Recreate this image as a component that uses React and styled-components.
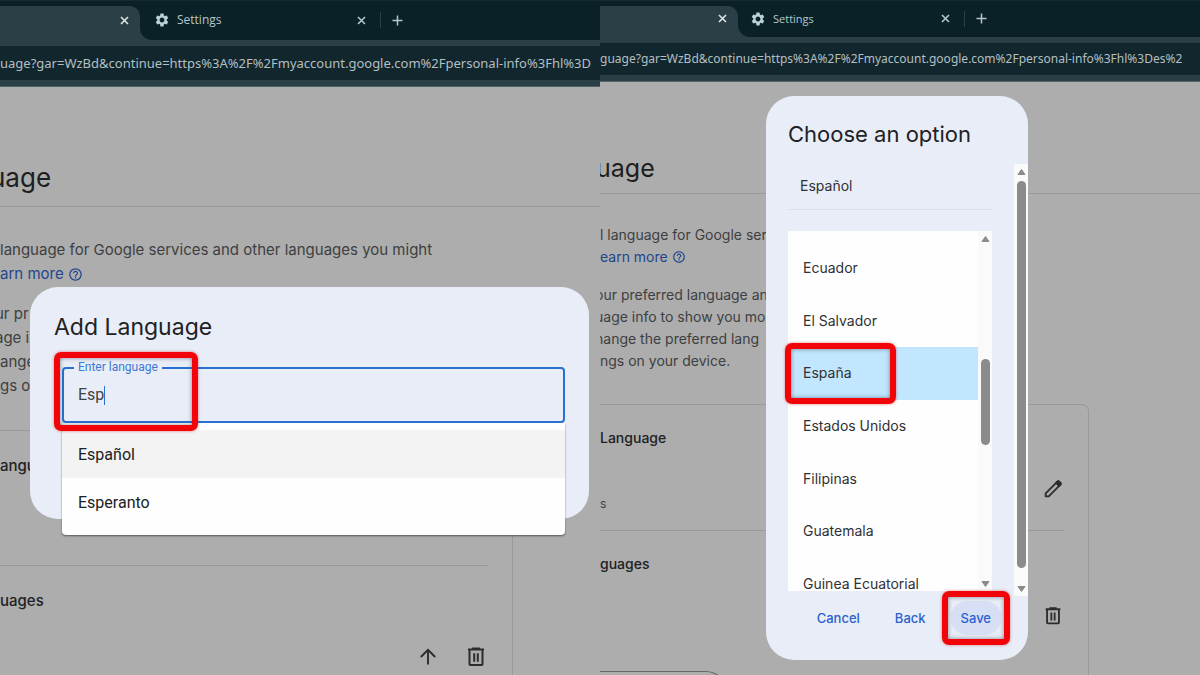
import React, { useState } from 'react';
import styled, { createGlobalStyle, css } from 'styled-components';
import { MdSettings, MdHelpOutline } from 'react-icons/md';

const GlobalStyle = createGlobalStyle`
    *, *::before, *::after {
        box-sizing: border-box;
    }

    body {
        margin: 0;
        background: #adadad;
        font-family: Inter, Roboto, sans-serif;
    }

    button, input {
        font-family: inherit;
    }
`

const Split = styled.main`
    display: grid;
    grid-template-columns: 1fr 1fr;
    height: 100vh;
    overflow: hidden;
`

const Pane = styled.section`
    position: relative;
    min-width: 0;
    overflow: hidden;
    background: #adadad;
    color: #202124;
`

/* ---------- browser chrome ---------- */

const TabStrip = styled.div`
    display: flex;
    align-items: stretch;
    height: ${({ $compact }) => ($compact ? 37 : 40)}px;
    padding-top: 6px;
    background: linear-gradient(#15292f 1px, #0a2127 1px);
`

const ActiveTab = styled.div`
    display: flex;
    align-items: center;
    justify-content: flex-end;
    width: ${({ $compact }) => ($compact ? 138 : 140)}px;
    padding-right: 11px;
    padding-bottom: 6px;
    background: #2a3f46;
    border-top-right-radius: 10px;
`

const TabRest = styled.div`
    flex: 1;
    display: flex;
    align-items: center;
    padding-bottom: 6px;
    padding-left: ${({ $compact }) => ($compact ? 12 : 14)}px;
    background: #0a2127;
    border-bottom-left-radius: 12px;
`

// fills the corner under the rounded edge of the inactive tabs
const TabCorner = styled.div`
    flex: 1;
    display: flex;
    background: linear-gradient(to right, #2a3f46 12px, #0a2127 12px) bottom / 100% 12px no-repeat;
`

const TabTitle = styled.span`
    flex: none;
    width: ${({ $compact }) => ($compact ? 175 : 187)}px;
    padding-left: 7px;
    font-family: 'Open Sans', 'Noto Sans', sans-serif;
    font-size: ${({ $compact }) => ($compact ? 11 : 12)}px;
    line-height: 16px;
    color: #b3c8cc;
`

const TabButton = styled.button`
    display: flex;
    padding: 0;
    border: none;
    background: none;
    color: ${({ $bright }) => ($bright ? '#dfe6e8' : '#b3c8cc')};
    cursor: pointer;
`

const TabDivider = styled.span`
    width: 1px;
    height: 16px;
    margin: 0 11px 0 14px;
    background: #2a3f46;
`

const Toolbar = styled.div`
    padding: 6px 0;
    background: #2a3f46;
    border-bottom: 1px solid #52646a;
`

const AddressBar = styled.div`
    height: ${({ $compact }) => ($compact ? 32 : 34)}px;
    line-height: ${({ $compact }) => ($compact ? 32 : 34)}px;
    overflow: hidden;
    white-space: nowrap;
    background: #12272d;
    font-family: 'Noto Sans', 'Open Sans', sans-serif;
    font-size: ${({ $compact }) => ($compact ? 12 : 13)}px;
    color: #b4bfc2;
`

/* ---------- settings page ---------- */

const PageHeading = styled.h1`
    margin: 0 0 0 ${({ $compact }) => ($compact ? -4 : -10)}px;
    padding-top: ${({ $compact }) => ($compact ? 69 : 74)}px;
    font-size: ${({ $compact }) => ($compact ? 25 : 26)}px;
    font-weight: 400;
    line-height: 34px;
    color: #1d1e20;
`

const HeadingRule = styled.hr`
    height: 1px;
    margin: ${({ $compact }) => ($compact ? 8 : 11)}px 0 ${({ $compact }) => ($compact ? 30 : 31)}px;
    border: none;
    background: #9b9b9b;
`

const Paragraph = styled.p`
    margin: 0 0 16px;
    font-size: ${({ $compact }) => ($compact ? 14 : 15)}px;
    line-height: ${({ $compact }) => ($compact ? 22 : 24)}px;
    color: #3d3f41;
    white-space: nowrap;
`

const Line = styled.span`
    display: block;
    margin-left: ${({ $cut }) => ($cut ? -5 : 0)}px;
`

const LearnMore = styled.a`
    display: inline-flex;
    align-items: center;
    gap: 4px;
    color: #1f468c;
    text-decoration: none;
`

const Card = styled.div`
    margin-top: 32px;
    margin-right: ${({ $compact }) => ($compact ? 111 : 87)}px;
    padding-right: 24px;
    height: 600px;
    border: 1px solid #999999;
    border-left: none;
    border-top-right-radius: 7px;
`

const CardSection = styled.div`
    display: flex;
    flex-direction: column;
    justify-content: space-between;
    height: ${({ $compact }) => ($compact ? 126 : 135)}px;
    padding: ${({ $compact }) => ($compact ? '22px 0 18px' : '24px 0 22px')};
    border-bottom: ${({ $last }) => ($last ? 'none' : '1px solid #999999')};
`

const CardTitle = styled.h2`
    margin: 0;
    font-size: ${({ $compact }) => ($compact ? 14 : 15)}px;
    font-weight: 500;
    line-height: 22px;
`

const CardRow = styled.div`
    display: flex;
    align-items: flex-end;
    justify-content: space-between;
    height: 34px;
    font-size: 12px;
    line-height: 16px;
    color: #3d3f41;
`

const IconGroup = styled.div`
    display: flex;
    align-self: flex-start;
    gap: 24px;
    margin-left: auto;
`

const IconButton = styled.button`
    display: flex;
    align-self: flex-start;
    padding: 0;
    border: none;
    background: none;
    color: #2b2c2e;
    cursor: pointer;
`

const AddPill = styled.button`
    width: 126px;
    height: 40px;
    margin-top: 14px;
    border: 1px solid #666869;
    border-left: none;
    border-radius: 0 20px 20px 0;
    background: none;
`

/* ---------- dialogs ---------- */

const Dialog = styled.div`
    position: absolute;
    background: #e8edf7;
    border-radius: 28px;
`

const LanguageDialog = styled(Dialog)`
    top: 287px;
    left: 30px;
    right: 11px;
    height: 232px;
    padding: 24px 24px 0 32px;
`

const RegionDialog = styled(Dialog)`
    display: flex;
    flex-direction: column;
    top: 96px;
    left: 166px;
    width: 262px;
    height: 564px;
    overflow: hidden;
`

const DialogTitle = styled.h2`
    margin: 0;
    font-weight: 400;
    font-size: ${({ $compact }) => ($compact ? 22 : 23)}px;
    line-height: 32px;
    color: #202124;
`

const LanguageTitle = styled(DialogTitle)`
    margin-left: -8px;
`

const RegionTitle = styled(DialogTitle)`
    padding: 22px 22px 14px;
`

const marker = css`
    content: '';
    position: absolute;
    border: 6px solid #f20509;
    border-radius: 7px;
    box-shadow: 0 0 3px rgba(200, 0, 0, 0.5), inset 0 0 4px rgba(60, 60, 80, 0.6);
    pointer-events: none;
    z-index: 2;
`

const Field = styled.label`
    position: relative;
    display: flex;
    align-items: center;
    height: 56px;
    margin-top: 24px;
    padding: 0 14px;
    border: 2px solid #2a6fd3;
    border-radius: 4px;
    font-family: Roboto, sans-serif;

    &::after {
        ${marker}
        top: -17px;
        left: -10px;
        width: 144px;
        height: 79px;
    }
`

const FieldLabel = styled.span`
    position: absolute;
    top: -10px;
    left: 10px;
    padding: 0 4px;
    background: #e8edf7;
    font-size: 12px;
    line-height: 16px;
    color: #3b7ad6;
`

const FieldInput = styled.input`
    field-sizing: content;
    padding: 0;
    border: none;
    outline: none;
    background: none;
    font-size: 16px;
    line-height: 24px;
    color: #3f4245;
    caret-color: transparent;
`

const Caret = styled.span`
    width: 1px;
    height: 19px;
    background: #2a6fd3;
`

const Suggestions = styled.div`
    padding: 7px 0 9px;
    background: #fefefe;
    border-radius: 0 0 4px 4px;
    box-shadow: 0 1px 2px rgba(0, 0, 0, 0.5);
`

const Suggestion = styled.button`
    display: block;
    width: 100%;
    height: 48px;
    padding: 0 16px;
    border: none;
    background: ${({ $active }) => ($active ? '#f3f3f3' : 'none')};
    font-family: Roboto, sans-serif;
    font-size: 16px;
    color: #202124;
    text-align: left;
    cursor: pointer;
`

const RegionBody = styled.div`
    display: flex;
    justify-content: space-between;
    height: 432px;
    margin-bottom: 5px;
    padding-left: 22px;
`

const RegionColumn = styled.div`
    width: 204px;
`

const ChosenLanguage = styled.div`
    height: 46px;
    padding-left: 12px;
    border-bottom: 1px solid #dcdfe5;
    font-size: 14px;
    line-height: 44px;
    color: #303134;
`

const ListBox = styled.div`
    display: flex;
    height: 360px;
    margin-top: 21px;
    overflow-x: visible;
    overflow-y: clip;
    background: #fefefe;
`

const OptionList = styled.div`
    flex: 1;
    display: grid;
    grid-auto-rows: 1fr;
    height: 368px;
    margin-top: 11px;
`

const Option = styled.button`
    position: relative;
    padding: 0 0 0 15px;
    border: none;
    background: ${({ $selected }) => ($selected ? '#c1e6fd' : 'none')};
    font-size: 14px;
    line-height: 20px;
    color: #303134;
    text-align: left;
    white-space: nowrap;
    cursor: pointer;

    ${({ $selected }) => $selected && css`
        &::after {
            ${marker}
            top: -4px;
            left: -3px;
            width: 111px;
            height: 61px;
        }
    `}
`

const ScrollTrack = styled.div`
    display: flex;
    flex-direction: column;
    align-items: center;
    justify-content: space-between;
    width: 14px;
    padding: 4px 0 3px;
    background: #fafafa;
    color: #8b8b8b;
`

const ScrollThumb = styled.div`
    width: 9px;
    height: ${({ $size }) => $size}px;
    margin-top: ${({ $offset }) => $offset}px;
    margin-bottom: auto;
    border-radius: 5px;
    background: #8b8b8b;
`

const Actions = styled.div`
    display: flex;
    justify-content: flex-end;
    gap: 15px;
    padding-right: 27px;
`

const ActionButton = styled.button`
    position: relative;
    height: 34px;
    padding: 0 10px;
    border: none;
    border-radius: 16px;
    background: ${({ $primary }) => ($primary ? '#d6dff4' : 'none')};
    font-size: 13px;
    font-weight: 500;
    color: #2b62cf;
    cursor: pointer;

    ${({ $primary }) => $primary && css`
        &::after {
            ${marker}
            inset: -10px -9px;
        }
    `}
`

/* ---------- icons ---------- */

const CloseIcon = () => (
    <svg width="9" height="9" viewBox="0 0 9 9" stroke="currentColor" strokeWidth="1.6" aria-hidden="true">
        <path d="M1 1l7 7M8 1L1 8" />
    </svg>
)

const PlusIcon = () => (
    <svg width="11" height="11" viewBox="0 0 11 11" stroke="currentColor" strokeWidth="1.5" aria-hidden="true">
        <path d="M5.500.5v10M.5 5.500h10" />
    </svg>
)

const TrashIcon = ({ size = 24 }) => (
    <svg width={size} height={size} viewBox="0 0 24 24" fill="none" stroke="currentColor" strokeWidth="2" aria-hidden="true">
        <path d="M4 4.600h16M9 4V3.500h6V4M5.500 5v14.200q0 .8.8.8h11.400q.8 0 .8-.8V5M10.200 8.200v8.600M13.800 8.200v8.600" />
    </svg>
)

const ArrowUpIcon = () => (
    <svg width="24" height="24" viewBox="0 0 24 24" fill="none" stroke="currentColor" strokeWidth="1.900" aria-hidden="true">
        <path d="M12 19.500V5M4.800 12L12 4.800 19.200 12" />
    </svg>
)

const PencilIcon = () => (
    <svg width="22" height="22" viewBox="0 0 24 24" fill="none" stroke="currentColor" strokeWidth="2" strokeLinejoin="round" aria-hidden="true">
        <path d="M4 20v-3.300L16.800 3.900q.9-.8 1.800 0l1.500 1.500q.8.9 0 1.800L7.300 20z" />
        <path d="M15.300 5.400l3.300 3.300 1.700-1.700q.6-.8 0-1.500l-1.800-1.800q-.7-.6-1.500 0z" fill="currentColor" />
    </svg>
)

const Triangle = ({ down }) => (
    <svg width="9" height="8" viewBox="0 0 9 8" fill="currentColor" stroke="currentColor" strokeLinejoin="round" aria-hidden="true">
        <path d={down ? 'M1 1.500h7L4.500 6.500z' : 'M1 6.500h7L4.500 1.500z'} />
    </svg>
)

const regions = [
    'Ecuador',
    'El Salvador',
    'España',
    'Estados Unidos',
    'Filipinas',
    'Guatemala',
    'Guinea Ecuatorial',
]

const BrowserBar = ({ url, compact }) => (
    <header>
        <TabStrip $compact={compact}>
            <ActiveTab $compact={compact}>
                <TabButton $bright aria-label="Close tab"><CloseIcon /></TabButton>
            </ActiveTab>
            <TabCorner>
                <TabRest $compact={compact}>
                    <MdSettings size={16} color="#b9d3d8" />
                    <TabTitle $compact={compact}>Settings</TabTitle>
                    <TabButton aria-label="Close tab"><CloseIcon /></TabButton>
                    <TabDivider />
                    <TabButton aria-label="New tab"><PlusIcon /></TabButton>
                </TabRest>
            </TabCorner>
        </TabStrip>
        <Toolbar>
            <AddressBar $compact={compact}>{url}</AddressBar>
        </Toolbar>
    </header>
)

const AddLanguage = () => {
    const [query, setQuery] = useState('Esp');

    return (
        <LanguageDialog role="dialog" aria-labelledby="add-language">
            <LanguageTitle id="add-language">Add Language</LanguageTitle>
            <Field>
                <FieldLabel>Enter language</FieldLabel>
                <FieldInput value={query} onChange={(e) => setQuery(e.target.value)} />
                <Caret />
            </Field>
            <Suggestions>
                <Suggestion $active>Español</Suggestion>
                <Suggestion>Esperanto</Suggestion>
            </Suggestions>
        </LanguageDialog>
    )
}

const ChooseOption = () => {
    const [region, setRegion] = useState('España');

    return (
        <RegionDialog role="dialog" aria-labelledby="choose-option">
            <RegionTitle id="choose-option" $compact>Choose an option</RegionTitle>
            <RegionBody>
                <RegionColumn>
                    <ChosenLanguage>Español</ChosenLanguage>
                    <ListBox>
                        <OptionList role="listbox" aria-label="Region">
                            {regions.map((name) => (
                                <Option
                                    key={name}
                                    role="option"
                                    aria-selected={name === region}
                                    $selected={name === region}
                                    onClick={() => setRegion(name)}
                                >
                                    {name}
                                </Option>
                            ))}
                        </OptionList>
                        <ScrollTrack>
                            <Triangle />
                            <ScrollThumb $size={86} $offset={116} />
                            <Triangle down />
                        </ScrollTrack>
                    </ListBox>
                </RegionColumn>
                <ScrollTrack>
                    <Triangle />
                    <ScrollThumb $size={387} $offset={5} />
                    <Triangle down />
                </ScrollTrack>
            </RegionBody>
            <Actions>
                <ActionButton>Cancel</ActionButton>
                <ActionButton>Back</ActionButton>
                <ActionButton $primary>Save</ActionButton>
            </Actions>
        </RegionDialog>
    )
}

const App = () => {
    return (
        <>
            <GlobalStyle />
            <Split>
                <Pane>
                    <BrowserBar url="uage?gar=WzBd&continue=https%3A%2F%2Fmyaccount.google.com%2Fpersonal-info%3Fhl%3D" />
                    <PageHeading>uage</PageHeading>
                    <HeadingRule />
                    <Paragraph>
                        <Line>language for Google services and other languages you might</Line>
                        <LearnMore href="#learn">arn more <MdHelpOutline size={15} /></LearnMore>
                    </Paragraph>
                    <Paragraph>
                        <Line $cut>ur pr</Line>
                        <Line $cut>age i</Line>
                        <Line>ange</Line>
                        <Line>gs o</Line>
                    </Paragraph>
                    <Card>
                        <CardSection>
                            <CardTitle>angu</CardTitle>
                        </CardSection>
                        <CardSection $last>
                            <CardTitle>uages</CardTitle>
                            <CardRow>
                                <IconGroup>
                                    <IconButton aria-label="Move up"><ArrowUpIcon /></IconButton>
                                    <IconButton aria-label="Delete"><TrashIcon /></IconButton>
                                </IconGroup>
                            </CardRow>
                        </CardSection>
                    </Card>
                    <AddLanguage />
                </Pane>
                <Pane>
                    <BrowserBar compact url="guage?gar=WzBd&continue=https%3A%2F%2Fmyaccount.google.com%2Fpersonal-info%3Fhl%3Des%2" />
                    <PageHeading $compact>uage</PageHeading>
                    <HeadingRule $compact />
                    <Paragraph $compact>
                        <Line>l language for Google ser</Line>
                        <LearnMore href="#learn">earn more <MdHelpOutline size={14} /></LearnMore>
                    </Paragraph>
                    <Paragraph $compact>
                        <Line $cut>our preferred language an</Line>
                        <Line $cut>uage info to show you mo</Line>
                        <Line $cut>hange the preferred lang</Line>
                        <Line>ngs on your device.</Line>
                    </Paragraph>
                    <Card $compact>
                        <CardSection $compact>
                            <CardTitle $compact>Language</CardTitle>
                            <CardRow>
                                s
                                <IconButton aria-label="Edit"><PencilIcon /></IconButton>
                            </CardRow>
                        </CardSection>
                        <CardSection $compact $last>
                            <CardTitle $compact>guages</CardTitle>
                            <CardRow>
                                <IconGroup>
                                    <IconButton aria-label="Delete"><TrashIcon size={22} /></IconButton>
                                </IconGroup>
                            </CardRow>
                        </CardSection>
                        <AddPill aria-label="Add another language" />
                    </Card>
                    <ChooseOption />
                </Pane>
            </Split>
        </>
    )
}

export default App
